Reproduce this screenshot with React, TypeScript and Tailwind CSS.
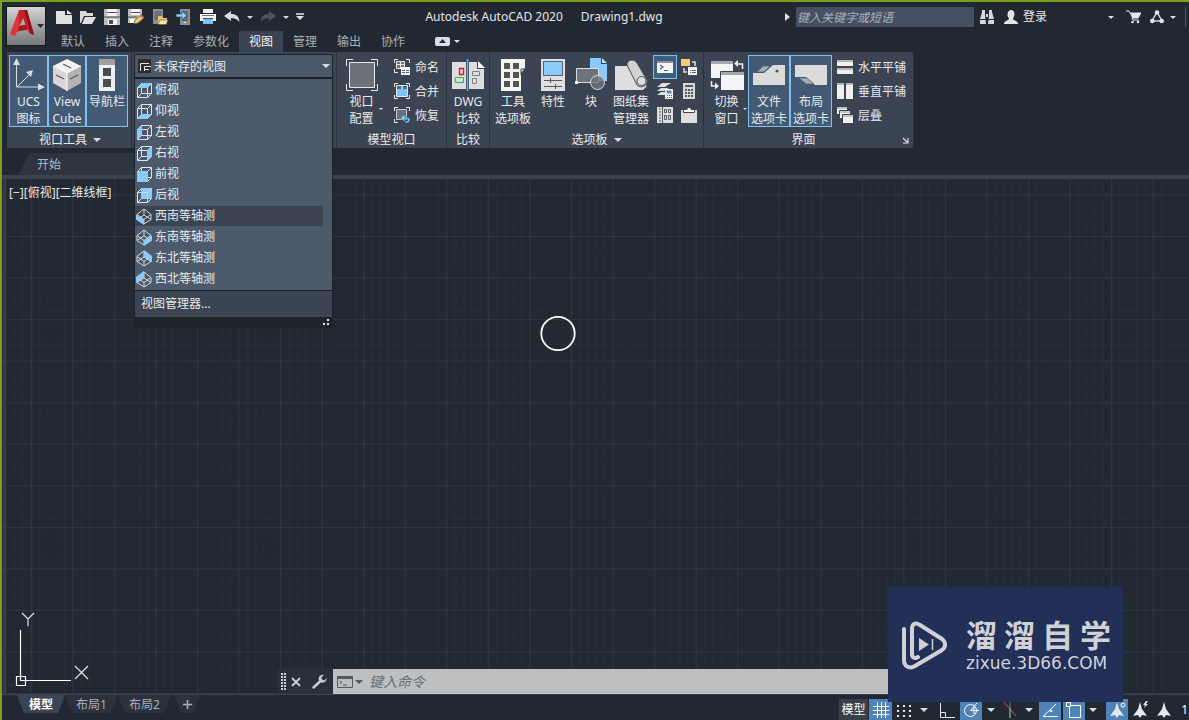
import React, { useState } from "react";

type Kids = { children?: React.ReactNode };

function Svg({ w = 16, h = 16, children }: Kids & { w?: number; h?: number }) {
  return (
    <svg width={w} height={h} viewBox={`0 0 ${w} ${h}`} fill="none" aria-hidden="true" className="shrink-0">
      {children}
    </svg>
  );
}

function Caret({ w = 8 }: { w?: number }) {
  return (
    <svg width={w} height={w / 2} viewBox="0 0 8 4" aria-hidden="true" className="shrink-0">
      <path d="M0 0h8L4 4z" fill="#d9dde2" />
    </svg>
  );
}

/* ---------- quick access icons ---------- */

const NewIcon = () => (
  <Svg>
    <path d="M0 2h9v4h7v9H0z" fill="#e0e0e0" />
    <path d="M11 1l5 4h-5z" fill="#f4f4f4" />
  </Svg>
);
const OpenIcon = () => (
  <Svg>
    <path d="M0 2h6l1 2h6v3H4L1 14H0z" fill="#d9d9d9" />
    <path d="M5 8h11l-4 7H2z" fill="#e0e0e0" />
  </Svg>
);
const SaveIcon = () => (
  <Svg>
    <path d="M0 0h16v16H0z" fill="#bdbdbd" />
    <path d="M3 0h10v7H3z" fill="#f5f5f5" />
    <path d="M3 3.500h10M0 8h16" stroke="#4a4f56" />
    <path d="M4 10h9v6H4z" fill="#f5f5f5" />
    <path d="M5 11h4v4H5z" fill="#4a4f56" />
  </Svg>
);
const SaveAsIcon = () => (
  <Svg>
    <path d="M0 0h14v5l-6 9H0z" fill="#bdbdbd" />
    <path d="M3 0h9v6H3z" fill="#f5f5f5" />
    <path d="M3 3.500h9M0 8h9" stroke="#4a4f56" />
    <path d="M2 10h6v4H2z" fill="#f5f5f5" />
    <path d="M6 15l1-4 6-5 3 3-6 5z" fill="#efc86f" stroke="#6b5530" strokeWidth=".8" />
    <path d="M12 7l1.500-1.500L16 8l-1.500 1.500z" fill="#e06a5a" />
  </Svg>
);
const MobileOpenIcon = () => (
  <Svg>
    <path d="M1 0h10v15H1z" fill="#8b8f94" />
    <path d="M2.500 2h7v9h-7z" fill="#6a6e74" />
    <path d="M6 7h4l1 2h4v6H6z" fill="#e9c374" />
    <path d="M8 11h8l-2 4.500H6z" fill="#fbe3a6" stroke="#6b5530" strokeWidth=".6" />
  </Svg>
);
const MobileSaveIcon = () => (
  <Svg>
    <path d="M4 0h10v16H4z" fill="#8b8f94" />
    <path d="M6 2h6v10H6z" fill="#626a75" />
    <path d="M8 13.500h2" stroke="#e8e8e8" />
    <path d="M0 5h6V2l5 4.500L6 11V8H0z" fill="#8ccbf7" stroke="#22303f" strokeWidth=".6" />
  </Svg>
);
const PrintIcon = () => (
  <Svg>
    <path d="M3 0h10v4H3z" fill="#f5f5f5" />
    <path d="M0 5h16v7H0z" fill="#f5f5f5" />
    <path d="M2 6.500h12" stroke="#6f757d" />
    <path d="M3 9h10v6H3z" fill="#7fbdf0" />
    <path d="M3 9.500h10" stroke="#4a4f56" />
  </Svg>
);
const UndoIcon = () => (
  <Svg>
    <path d="M0 7l7-5v3c5 0 8 2 8.500 8C13 10 11 9 7 9v3z" fill="#d9dde2" />
  </Svg>
);
const RedoIcon = () => (
  <Svg>
    <path d="M16 7L9 2v3C4 5 1 7 .5 13 3 10 5 9 9 9v3z" fill="#4c535e" />
  </Svg>
);

/* ---------- ribbon icons ---------- */

const UcsIcon = () => (
  <Svg w={32} h={33}>
    <path d="M3.500 3v26H29M4 29l13-13" stroke="#d9dde2" />
    <path d="M3.500 0L7 7H0zM32 29l-7 3.500v-7zM20 12l-2 7-5-5z" fill="#d9dde2" />
  </Svg>
);
const CubeIcon = () => (
  <Svg w={32} h={34}>
    <path d="M16 1l14 7-14 7L2 8z" fill="#f4f3f1" />
    <path d="M2 8l14 7v18L2 25z" fill="#d8d6d4" />
    <path d="M30 8l-14 7v18l14-8z" fill="#b4b2b2" />
    <path d="M2 8l14 7 14-7M16 15v18" stroke="#fff" />
    <path d="M12 6l8 4M5 17l8 4M19 21l8-4" stroke="#55585c" strokeWidth="1.300" />
  </Svg>
);
const NavBarIcon = () => (
  <Svg w={16} h={32}>
    <path d="M0 0h16v32H0z" fill="#f0f0f0" />
    <path d="M0 0h16v6H0z" fill="#a09f9d" />
    <path d="M4 9h8v8H4zM4 20h8v8H4z" fill="#4c4c4c" />
  </Svg>
);
const ViewportIcon = () => (
  <Svg w={32} h={32}>
    <path d="M3.500 3.500h25v25h-25z" fill="#6b7079" stroke="#e8e8e8" />
    <path d="M.5 7V.5H7M25 .5h6.500V7M31.500 25v6.500H25M7 31.500H.5V25" stroke="#e8e8e8" />
  </Svg>
);
const Corners = () => (
  <path d="M.5 4V.5H4M12 .5h3.500V4M15.500 12v3.500H12M4 15.500H.5V12" stroke="#e8e8e8" />
);
const NamedIcon = () => (
  <Svg>
    <path d="M.5 4V.5H4M12 .5h3.500V4M4 13.500H.5V10" stroke="#e8e8e8" />
    <path d="M2.500 2.500h8v7h-8zM6.500 2v7M3 5.500h8" fill="#6b7079" stroke="#e8e8e8" />
    <path d="M7 8h9v8H7z" fill="#f5f5f5" />
    <path d="M8 11.500h3M12 11.500h3M8 13.500h3M12 13.500h3" stroke="#55606e" />
  </Svg>
);
const JoinIcon = () => (
  <Svg>
    <Corners />
    <path d="M2.500 2.500h11v11h-11z" fill="#7fc4f7" stroke="#e8e8e8" />
    <path d="M3 3h4v3H3zM9 3h4v3H9z" fill="#5d6875" />
    <path d="M8 3v3" stroke="#e8e8e8" />
  </Svg>
);
const RestoreIcon = () => (
  <Svg>
    <path d="M.5 4V.5H4M12 .5h3.500V4M4 15.500H.5V12" stroke="#e8e8e8" />
    <path d="M2.500 2.500h10v10h-10z" fill="#6b7079" stroke="#c8ccd0" />
    <path d="M6 11l5-4v3c3 0 5 1 5 3s-2 3-5 3v-2c2 0 3-.5 3-1s-1-1-3-1v3z" fill="#7fc4f7" stroke="#2c4560" strokeWidth=".5" />
  </Svg>
);
const DwgIcon = () => (
  <Svg w={34} h={32}>
    <path d="M1 3h14v27H1z" fill="#dedede" />
    <path d="M18 3h8v7h7v20H18z" fill="#dedede" />
    <path d="M27 2l7 7h-7z" fill="#fff" />
    <path d="M16.500 0v32" stroke="#62b0ee" strokeWidth="1.500" />
    <path d="M8.500 9.500h4v6h-4z" stroke="#cf1f2c" strokeWidth="1.500" />
    <path d="M4.500 18.500h8v5h-8z" fill="#c7efc9" stroke="#3fa552" />
    <path d="M21.500 12.500h7v4h-7zM21.500 19.500h4v5h-4z" stroke="#80858b" />
  </Svg>
);
const PaletteIcon = () => (
  <Svg w={25} h={32}>
    <path d="M0 0h24v9l-4 5v18H0z" fill="#f4f4f4" />
    <path d="M3 4h6v6H3zM12 4h6v6h-6zM3 13h6v6H3zM12 13h6v6h-6zM3 22h6v6H3zM12 22h6v6h-6z" fill="#555450" />
    <path d="M24 10h-4v6" stroke="#3b4453" />
  </Svg>
);
const PropsIcon = () => (
  <Svg w={24} h={32}>
    <path d="M0 0h24v32H0z" fill="#e0e0e0" />
    <path d="M2.500 2.500h19v14h-19z" fill="#8bcafb" stroke="#4f6273" />
    <path d="M3 21.500h18M3 27.500h18M9.500 19v5M14.500 25v5" stroke="#55595f" />
  </Svg>
);
const BlockIcon = () => (
  <Svg w={33} h={33}>
    <path d="M15 0h11v6h6v17H15z" fill="#8bcafb" />
    <path d="M27 0l5 5h-5z" fill="#b7defc" />
    <path d="M1.500 10.500h22v14h-22z" fill="#6d727b" stroke="#d9dde2" />
    <circle cx="22.500" cy="24.500" r="7" fill="#6d727b" fillOpacity=".8" stroke="#d9dde2" />
    <path d="M0 23h3v3H0z" fill="#fff" />
  </Svg>
);
const SheetSetIcon = () => (
  <Svg w={33} h={32}>
    <path d="M0 7h12l12 17 8 3-4 4H0z" fill="#dedede" />
    <path d="M12 6c0-5 7-7 10-2l10 17c1 6-6 9-10 5z" fill="#d2d2d2" stroke="#4b4f55" />
    <circle cx="26.500" cy="22" r="4.500" fill="#dedede" stroke="#4b4f55" />
  </Svg>
);
const CmdIcon = () => (
  <Svg>
    <path d="M0 2h16v12H0z" fill="#f5f5f5" />
    <path d="M0 2h16v2H0z" fill="#8d9298" />
    <path d="M3 6l3 2-3 2M7 11.500h4" stroke="#46607a" strokeWidth="1.200" />
  </Svg>
);
const MarkupIcon = () => (
  <Svg>
    <path d="M0 0h9v7H0z" fill="#f3cc75" />
    <path d="M3 9v4h3M11 3h3v4" stroke="#e0e0e0" strokeWidth="1.500" />
    <path d="M7 8h9v8H7z" fill="#f5f5f5" />
    <path d="M9 11.500h1M11 11.500h4M9 13.500h1M11 13.500h4" stroke="#55606e" />
  </Svg>
);
const LayerCalcIcon = () => (
  <Svg>
    <path d="M5 0h9L8 4H0zM4 5h8L7 8H0zM4 9h4v3H0z" fill="#dedede" />
    <path d="M8 6h8v10H8z" fill="#f5f5f5" />
    <path d="M9.500 7.500h5v3h-5z" fill="#4e8cc4" />
    <path d="M10 12.500h5M10 14.500h5" stroke="#44607c" strokeDasharray="1 1" />
  </Svg>
);
const CalcIcon = () => (
  <Svg>
    <path d="M2 0h12v16H2z" fill="#d9d9d9" />
    <path d="M4 2h8v2H4z" fill="#555a61" />
    <path d="M4 7h8M4 10h8M4 13h8" stroke="#555a61" strokeWidth="2" strokeDasharray="2 1" />
  </Svg>
);
const DesignIcon = () => (
  <Svg>
    <path d="M0 0h16v16H0z" fill="#dedede" />
    <path d="M5.500 0v16" stroke="#555a61" />
    <path d="M2 2h2M2 5h2M2 8h2M2 11h2M2 14h2" stroke="#555a61" />
    <path d="M7.500 2.500h2v3h-2zM11.500 2.500h2v3h-2zM7.500 8.500h2v4h-2zM11.500 8.500h2v4h-2z" stroke="#555a61" />
  </Svg>
);
const ClipIcon = () => (
  <Svg>
    <path d="M0 3h16v13H0z" fill="#dedede" />
    <path d="M3 5V3h3l1-2h2l1 2h3v2z" fill="#fff" />
    <path d="M2.500 3v2.500h11V3" stroke="#3b4453" />
  </Svg>
);
const SwitchIcon = () => (
  <Svg w={34} h={30}>
    <path d="M1 1h22v17H1z" fill="#f5f5f5" />
    <path d="M1 1h22v3H1z" fill="#a4a7ab" />
    <path d="M10.500 11.500H35V31H10.500z" fill="#f5f5f5" stroke="#3b4453" />
    <path d="M11 12h23v3H11z" fill="#a4a7ab" />
    <path d="M26 4h6.500v5" stroke="#f0f0f0" strokeWidth="1.500" />
    <path d="M28 0v7l-4-3.500z" fill="#f0f0f0" />
    <path d="M1.500 21v5H6" stroke="#f0f0f0" strokeWidth="1.500" />
    <path d="M5 22.500v7L9 26z" fill="#f0f0f0" />
  </Svg>
);
const FileTabIcon = () => (
  <Svg w={32} h={22}>
    <path d="M0 9h11l9-8h12v20H0z" fill="#dbdbdb" />
    <path d="M4 8l6-6h7l-6 6z" fill="#a6a9ad" stroke="#4a5a6a" strokeWidth=".6" />
    <circle cx="24" cy="7" r="1.500" fill="#4a5055" />
  </Svg>
);
const LayoutTabIcon = () => (
  <Svg w={32} h={22}>
    <path d="M0 1h32v20H20l-9-8H0z" fill="#dbdbdb" />
    <path d="M4 14h8l7 6h-8z" fill="#a6a9ad" stroke="#4a5a6a" strokeWidth=".6" />
  </Svg>
);
const HTileIcon = () => (
  <Svg>
    <path d="M0 1h16v6H0zM0 9h16v6H0z" fill="#f0f0f0" />
    <path d="M0 1h16v2H0zM0 9h16v2H0z" fill="#b3b5b8" />
  </Svg>
);
const VTileIcon = () => (
  <Svg>
    <path d="M0 0h7v16H0zM9 0h7v16H9z" fill="#f0f0f0" />
    <path d="M0 0h7v2H0zM9 0h7v2H9z" fill="#b3b5b8" />
  </Svg>
);
const CascadeIcon = () => (
  <Svg>
    <path d="M0 0h10v7H0z" fill="#f0f0f0" />
    <path d="M2.500 3.500h11v8h-11z" fill="#f0f0f0" stroke="#3b4453" />
    <path d="M5.500 7.500H17V17H5.500z" fill="#f0f0f0" stroke="#3b4453" />
    <path d="M0 0h10v2H0zM3 4h10v2H3zM6 8h10v2H6z" fill="#c4c6c9" />
  </Svg>
);

/* ---------- saved view icons ---------- */

const orthoFaces: Record<string, string> = {
  top: "M1 6l5-5h10l-5 5z",
  bottom: "M1 16l5-5h10l-5 5z",
  left: "M1 6l5-5v10l-5 5z",
  right: "M11 6l5-5v10l-5 5z",
  front: "M1 5h11v11H1z",
  back: "M5 1h11v11H5z",
};
const isoFaces: Record<string, string> = {
  sw: "M0 6.500l8 5V17l-8-5.500z",
  se: "M16 6.500l-8 5V17l8-5.500z",
  ne: "M8 0l8 6v6L8 7z",
  nw: "M8 0L0 6v6l8-5z",
};

function ViewIcon({ kind }: { kind: string }) {
  const ortho = kind in orthoFaces;
  return (
    <Svg w={17} h={17}>
      {ortho ? (
        <>
          <path
            d="M5.500 1.500h10v10h-10zM1.500 5.500h10v10h-10zM1.500 5.500l4-4M11.500 5.500l4-4M11.500 15.500l4-4M1.500 15.500l4-4"
            stroke="#dfe3e8"
          />
          <path d={orthoFaces[kind]} fill="#8bcafb" />
          {kind === "back" && <path d="M1.500 5.500h10v10M11.500 5.500l4-4" stroke="#b9dcf7" />}
        </>
      ) : (
        <>
          <path d="M8 1l7 5.500v5L8 16l-7-4.500v-5zM1 6.500l7 5 7-5M8 11.500V16M8 1v6M1 11.500L8 7l7 4.500" stroke="#dfe3e8" strokeWidth=".9" />
          <path d={isoFaces[kind]} fill="#8bcafb" />
        </>
      )}
    </Svg>
  );
}

const views = [
  { kind: "top", label: "俯视" },
  { kind: "bottom", label: "仰视" },
  { kind: "left", label: "左视" },
  { kind: "right", label: "右视" },
  { kind: "front", label: "前视" },
  { kind: "back", label: "后视" },
  { kind: "sw", label: "西南等轴测" },
  { kind: "se", label: "东南等轴测" },
  { kind: "ne", label: "东北等轴测" },
  { kind: "nw", label: "西北等轴测" },
];

/* ---------- ribbon parts ---------- */

function Panel({
  title,
  className = "",
  caret,
  launcher,
  children,
}: Kids & { title: string; className?: string; caret?: boolean; launcher?: boolean }) {
  return (
    <section className={`relative flex shrink-0 flex-col border-r border-[#2a313c] bg-[#3b4453] ${className}`}>
      <div className="flex h-20 items-start pt-[3px]">{children}</div>
      <h2 className={`flex h-4 items-center justify-center gap-1.5 leading-4 ${launcher ? "pr-2.5" : ""}`}>
        {title}
        {caret && <Caret />}
      </h2>
      {launcher && (
        <button aria-label="界面设置" className="absolute right-1 bottom-1">
          <Svg w={7} h={7}>
            <path d="M1 1l4 4M6 1v5H1" stroke="#d9dde2" strokeWidth="1.200" />
          </Svg>
        </button>
      )}
    </section>
  );
}

function BigButton({
  icon,
  lines,
  on,
  caret,
  className = "",
}: {
  icon: React.ReactNode;
  lines: string[];
  on?: boolean;
  caret?: boolean;
  className?: string;
}) {
  return (
    <button
      className={`relative flex h-[72px] shrink-0 flex-col items-center border leading-[17px] whitespace-nowrap ${
        on ? "border-[#7fc0f0] bg-[#425a74]" : "border-transparent"
      } ${className}`}
    >
      <span className="flex h-[37px] shrink-0 items-center">{icon}</span>
      {lines.map((l) => (
        <span key={l}>{l}</span>
      ))}
      {caret && (
        <span className="absolute right-0 bottom-4">
          <Caret w={4} />
        </span>
      )}
    </button>
  );
}

function SmallButton({ icon, label }: { icon: React.ReactNode; label: string }) {
  return (
    <button className="flex h-6 items-center gap-[5px] whitespace-nowrap">
      {icon}
      <span className="pt-0.5">{label}</span>
    </button>
  );
}

function ToolCell({ icon, label, on }: { icon: React.ReactNode; label: string; on?: boolean }) {
  return (
    <button
      aria-label={label}
      className={`flex size-6 items-center justify-center border ${
        on ? "border-[#7fc0f0] bg-[#3f5f7f]" : "border-transparent"
      }`}
    >
      {icon}
    </button>
  );
}

function ViewsPanel() {
  const [current, setCurrent] = useState("未保存的视图");
  const [hover, setHover] = useState("sw");
  return (
    <section className="relative w-[205px] shrink-0 border-r border-[#2a313c] bg-[#3b4453] pt-[2px] pr-[3px] pl-0.5">
      <div className="relative flex h-6 items-center border border-[#1c2129] bg-[#4b586a]">
        <span className="pointer-events-none absolute left-[3px] flex bg-[#2c2c2c]">
          <Svg w={13} h={14}>
            <path d="M2.500 12V4.500H11M6.500 12V7.500H13M6.500 10.500H11" stroke="#e4e4dc" />
          </Svg>
        </span>
        <select
          aria-label="视图"
          value={current}
          onChange={(e) => setCurrent(e.target.value)}
          className="h-full w-full appearance-none bg-transparent pt-0.5 pl-[19px] outline-none"
        >
          <option>{current}</option>
        </select>
        <span className="pointer-events-none absolute right-0.5 flex">
          <Caret />
        </span>
      </div>
      <div className="absolute top-[26px] right-[3px] left-0.5 z-20 border border-[#1c2129] bg-[#4d5a6b]">
        <ul className="pt-px">
          {views.map((v) => (
            <li key={v.kind} className="h-[21px] pr-[9px]">
              <button
                onMouseEnter={() => setHover(v.kind)}
                onClick={() => setCurrent(v.label)}
                className={`flex h-5 w-full items-center gap-0.5 pl-px ${hover === v.kind ? "bg-[#3c4451]" : ""}`}
              >
                <ViewIcon kind={v.kind} />
                {v.label}
              </button>
            </li>
          ))}
        </ul>
        <button className="flex h-[27px] w-full items-center border-t border-[#1c2129] bg-[#3b4453] pl-1.5">
          视图管理器...
        </button>
        <div className="flex h-2.5 items-center justify-end bg-[#1e242c] pr-0.5">
          <Svg w={7} h={7}>
            <path d="M4 0h2v2H4zM4 4h2v2H4zM0 4h2v2H0z" fill="#e0e3e7" />
          </Svg>
        </div>
      </div>
    </section>
  );
}

function Ribbon() {
  return (
    <div className="flex h-24 pl-[5px]">
      <Panel title="视口工具" caret className="w-[125px] pl-0.5">
        <BigButton on icon={<UcsIcon />} lines={["UCS", "图标"]} className="w-[39px]" />
        <BigButton on icon={<CubeIcon />} lines={["View", "Cube"]} className="w-[38px]" />
        <BigButton on icon={<NavBarIcon />} lines={["导航栏"]} className="w-[42px]" />
      </Panel>
      <ViewsPanel />
      <Panel title="模型视口" className="w-[110px]">
        <BigButton caret icon={<ViewportIcon />} lines={["视口", "配置"]} className="mr-2.5 ml-0.5 w-[45px]" />
        <div className="flex flex-col">
          <SmallButton icon={<NamedIcon />} label="命名" />
          <SmallButton icon={<JoinIcon />} label="合并" />
          <SmallButton icon={<RestoreIcon />} label="恢复" />
        </div>
      </Panel>
      <Panel title="比较" className="w-[43px]">
        <BigButton icon={<DwgIcon />} lines={["DWG", "比较"]} className="w-full" />
      </Panel>
      <Panel title="选项板" caret className="w-[214px]">
        <BigButton icon={<PaletteIcon />} lines={["工具", "选项板"]} className="ml-[3px] w-10" />
        <BigButton icon={<PropsIcon />} lines={["特性"]} className="w-10" />
        <BigButton icon={<BlockIcon />} lines={["块"]} className="w-9" />
        <BigButton icon={<SheetSetIcon />} lines={["图纸集", "管理器"]} className="w-11" />
        <div className="grid grid-cols-2">
          <ToolCell on icon={<CmdIcon />} label="命令行" />
          <ToolCell icon={<MarkupIcon />} label="标记集管理器" />
          <ToolCell icon={<LayerCalcIcon />} label="图层特性" />
          <ToolCell icon={<CalcIcon />} label="快速计算器" />
          <ToolCell icon={<DesignIcon />} label="设计中心" />
          <ToolCell icon={<ClipIcon />} label="剪贴板" />
        </div>
      </Panel>
      <Panel title="界面" launcher className="w-[210px]">
        <BigButton caret icon={<SwitchIcon />} lines={["切换", "窗口"]} className="ml-px w-[43px]" />
        <BigButton on icon={<FileTabIcon />} lines={["文件", "选项卡"]} className="w-[42px]" />
        <BigButton on icon={<LayoutTabIcon />} lines={["布局", "选项卡"]} className="w-[42px]" />
        <div className="ml-[5px] flex flex-col">
          <SmallButton icon={<HTileIcon />} label="水平平铺" />
          <SmallButton icon={<VTileIcon />} label="垂直平铺" />
          <SmallButton icon={<CascadeIcon />} label="层叠" />
        </div>
      </Panel>
    </div>
  );
}

/* ---------- title bar ---------- */

function QuickButton({ label, className = "w-6", children }: Kids & { label: string; className?: string }) {
  return (
    <button aria-label={label} className={`flex h-6 shrink-0 items-center justify-center ${className}`}>
      {children}
    </button>
  );
}

function TitleBar() {
  return (
    <div className="flex h-[29px] items-center pt-px pl-1.5">
      <QuickButton label="新建"><NewIcon /></QuickButton>
      <QuickButton label="打开"><OpenIcon /></QuickButton>
      <QuickButton label="保存"><SaveIcon /></QuickButton>
      <QuickButton label="另存为"><SaveAsIcon /></QuickButton>
      <QuickButton label="从移动设备打开"><MobileOpenIcon /></QuickButton>
      <QuickButton label="保存到移动设备"><MobileSaveIcon /></QuickButton>
      <QuickButton label="打印"><PrintIcon /></QuickButton>
      <QuickButton label="放弃"><UndoIcon /></QuickButton>
      <QuickButton label="放弃列表" className="w-3"><Caret w={6} /></QuickButton>
      <QuickButton label="重做"><RedoIcon /></QuickButton>
      <QuickButton label="重做列表" className="w-3"><Caret w={6} /></QuickButton>
      <QuickButton label="自定义快速访问工具栏" className="w-4">
        <Svg w={8} h={8}>
          <path d="M0 1h8" stroke="#e0e3e7" strokeWidth="1.500" />
          <path d="M0 3h8L4 7z" fill="#e0e3e7" />
        </Svg>
      </QuickButton>
      <h1 className="flex flex-1 justify-center gap-[18px] text-xs whitespace-nowrap text-[#e4e6e9]">
        <span>Autodesk AutoCAD 2020</span>
        <span>Drawing1.dwg</span>
      </h1>
      <QuickButton label="展开搜索" className="w-4">
        <Svg w={5} h={8}>
          <path d="M0 0v8l5-4z" fill="#e0e3e7" />
        </Svg>
      </QuickButton>
      <input
        aria-label="搜索"
        placeholder="键入关键字或短语"
        className="h-5 w-[178px] bg-[#465062] px-px text-xs italic outline-none placeholder:text-[#aab2bf]"
      />
      <QuickButton label="搜索" className="w-[26px]">
        <Svg w={14} h={14}>
          <path d="M2 2h3v3l1 9H0V9zM12 2H9v3l-1 9h6V9z" fill="#d5d8dc" />
          <path d="M2 0h3v2H2zM9 0h3v2H9zM6 4h2v3H6z" fill="#d5d8dc" />
          <path d="M0 9.500h6M8 9.500h6" stroke="#222831" />
        </Svg>
      </QuickButton>
      <button className="flex items-center gap-[5px] pl-1 whitespace-nowrap">
        <Svg w={14} h={15}>
          <path d="M7 0c2.500 0 3.500 2 3.500 4S9 8 9 9c0 1 5 2 5 5H0c0-3 5-4 5-5 0-1-1.500-2-1.500-4S4.500 0 7 0z" fill="#e4e6e9" />
        </Svg>
        登录
      </button>
      <QuickButton label="登录菜单" className="ml-14 w-4"><Caret w={6} /></QuickButton>
      <QuickButton label="应用商店" className="w-7">
        <Svg w={15} h={14}>
          <path d="M0 1h3l1 2h11l-3 5H6l1 2h6" stroke="#e0e5f0" />
          <path d="M4 3h11l-3 5H6z" fill="#e0e5f0" />
          <circle cx="6.500" cy="12" r="1.300" fill="#e0e5f0" />
          <circle cx="12" cy="12" r="1.300" fill="#e0e5f0" />
        </Svg>
      </QuickButton>
      <QuickButton label="保持连接" className="w-5">
        <Svg w={14} h={14}>
          <path d="M7 2l5 9H2z" stroke="#cdd6ea" strokeWidth="1.500" />
          <circle cx="7" cy="2.500" r="2.300" fill="#dfe5f3" />
          <circle cx="2.300" cy="11" r="2.300" fill="#dfe5f3" />
          <circle cx="11.700" cy="11" r="2.300" fill="#dfe5f3" />
        </Svg>
      </QuickButton>
      <QuickButton label="连接菜单" className="w-3"><Caret w={6} /></QuickButton>
      <span className="mr-[3px] ml-1.5 h-5 w-px bg-[#4d5561]" />
    </div>
  );
}

const tabs = ["默认", "插入", "注释", "参数化", "视图", "管理", "输出", "协作"];

function RibbonTabs() {
  return (
    <nav className="flex h-[21px] pl-[5px] text-[#a9b0ba]">
      {tabs.map((t) => (
        <button
          key={t}
          className={`px-2.5 whitespace-nowrap ${t === "视图" ? "bg-[#3b4453] text-[#f0f2f4]" : ""}`}
        >
          {t}
        </button>
      ))}
      <button aria-label="最小化功能区" className="ml-5 flex items-center gap-1">
        <Svg w={15} h={9}>
          <rect x="0" y="0" width="15" height="9" rx="2" fill="#d9dde8" />
          <path d="M4 6l3.500-4L11 6z" fill="#222831" />
        </Svg>
        <Caret w={6} />
      </button>
    </nav>
  );
}

/* ---------- drawing area ---------- */

function Canvas() {
  return (
    <main className="relative flex-1 overflow-hidden border-b border-[#3d4550] bg-[#212831]">
      <svg className="absolute inset-0 h-full w-full" aria-hidden="true">
        <defs>
          <pattern id="minor" width="8.310" height="8.310" x="28.800" y="15.500" patternUnits="userSpaceOnUse">
            <path d="M0 .5h8.310M.5 0v8.310" stroke="#252d37" />
          </pattern>
          <pattern id="major" width="41.550" height="41.550" x="28.800" y="15.500" patternUnits="userSpaceOnUse">
            <path d="M0 .5h41.550M.5 0v41.550" stroke="#2d3641" />
          </pattern>
        </defs>
        <rect width="100%" height="100%" fill="url(#minor)" />
        <rect width="100%" height="100%" fill="url(#major)" />
        <path d="M2.500 0v2000" stroke="#343d48" strokeWidth="3" />
        <circle cx="556" cy="154.500" r="16.700" stroke="#fff" strokeWidth="1.800" fill="none" />
      </svg>
      <p className="relative pt-[5px] pl-[7px] leading-[18px] text-[#e8eaec]">[−][俯视][二维线框]</p>
      <svg width="80" height="76" className="absolute bottom-2 left-3" fill="none" aria-hidden="true">
        <path d="M6.500 20v50.500H57M2.500 66.500h9v9h-9z" stroke="#fff" strokeWidth="1.200" />
        <path d="M8 3l6 6 6-6M14 9v7M61 56l13 13M74 56L61 69" stroke="#e0e3e7" strokeWidth="1.200" />
      </svg>
      <div className="absolute right-[65px] bottom-0 left-[275px] flex h-[25px] items-stretch">
        <div className="flex w-14 items-center gap-[5px] bg-[#2a303b] pl-1">
          <Svg w={5} h={18}>
            <path d="M1 0v18M4 0v18" stroke="#d0d3d7" strokeWidth="2" strokeDasharray="2 1" />
          </Svg>
          <button aria-label="关闭">
            <Svg w={10} h={10}>
              <path d="M1 1l8 8M9 1L1 9" stroke="#c9ccd0" strokeWidth="1.800" />
            </Svg>
          </button>
          <button aria-label="自定义" className="ml-1.5">
            <Svg w={15} h={15}>
              <path d="M1.500 13.500L9 6.500" stroke="#c9ccd0" strokeWidth="2.500" strokeLinecap="round" />
              <path d="M12 1a4 4 0 10 2.500 3l-2 2.500-2.500-1-.5-2.500z" fill="#c9ccd0" />
            </Svg>
          </button>
        </div>
        <label className="flex flex-1 items-center gap-0.5 bg-[#bdbfc1] pl-1">
          <Svg w={16} h={12}>
            <path d="M.5.5h15v11H.5z" stroke="#55585c" />
            <path d="M0 0h16v3H0z" fill="#55585c" />
            <path d="M2.500 5l2.500 1.500L2.500 8M6 9h4" stroke="#55585c" />
          </Svg>
          <svg width="8" height="4" viewBox="0 0 8 4" aria-hidden="true">
            <path d="M0 0h8L4 4z" fill="#55585c" />
          </svg>
          <input
            aria-label="命令行"
            placeholder="键入命令"
            className="ml-1 min-w-0 flex-1 bg-transparent text-sm italic outline-none placeholder:text-[#6b6e72]"
          />
        </label>
        <span className="my-[7px] w-px bg-transparent shadow-none" />
      </div>
    </main>
  );
}

/* ---------- status bar ---------- */

const tabShape = "[clip-path:polygon(0_0,100%_0,calc(100%-7px)_100%,7px_100%)]";

function StatusButton({ label, on, className = "w-[22px]", children }: Kids & { label: string; on?: boolean; className?: string }) {
  return (
    <button
      aria-label={label}
      className={`flex h-full shrink-0 items-center justify-center ${on ? "bg-[#5083b8]" : ""} ${className}`}
    >
      {children}
    </button>
  );
}

const Person = () => <path d="M8 1l2 7 5 7-5-1-2 3-2-3-5 1 5-7z" fill="#e4e7eb" />;

function StatusBar() {
  return (
    <footer className="flex h-[25px] justify-between overflow-hidden">
      <div className="flex h-[18px] pl-[15px] text-[#a9b0ba]">
        <button className={`bg-[#3b4453] px-3 pt-px font-bold whitespace-nowrap text-white ${tabShape}`}>模型</button>
        <button className={`bg-[#2b323e] px-[11px] pt-px whitespace-nowrap ${tabShape}`}>布局1</button>
        <button className={`bg-[#2b323e] px-[11px] pt-px whitespace-nowrap ${tabShape}`}>布局2</button>
        <button aria-label="新建布局" className={`ml-1 flex items-center bg-[#2b323e] px-2 ${tabShape}`}>
          <Svg w={9} h={9}>
            <path d="M4.500 0v9M0 4.500h9" stroke="#a9b0ba" strokeWidth="1.600" />
          </Svg>
        </button>
      </div>
      <div className="mt-1 flex h-[21px] items-stretch justify-end">
        <button className="w-[29px] bg-[#38404c] whitespace-nowrap text-white">模型</button>
        <StatusButton label="栅格" on className="ml-px w-[23px]">
          <Svg>
            <path d="M4.500 0v16M8.500 0v16M12.500 0v16M0 4.500h16M0 8.500h16M0 12.500h16" stroke="#fff" />
          </Svg>
        </StatusButton>
        <StatusButton label="捕捉" className="w-6">
          <Svg w={14} h={14}>
            <path d="M0 3h14M0 8h14M0 13h14" stroke="#e4e7eb" strokeWidth="2" strokeDasharray="2 4" />
          </Svg>
        </StatusButton>
        <StatusButton label="捕捉菜单" className="w-4"><Caret w={8} /></StatusButton>
        <StatusButton label="正交" className="ml-0.5 w-[26px]">
          <Svg>
            <path d="M1.500 1v14.500H16M1.500 10.500h5v5" stroke="#e4e7eb" />
          </Svg>
        </StatusButton>
        <StatusButton label="极轴追踪" on>
          <Svg>
            <circle cx="7.500" cy="8.500" r="6" stroke="#fff" />
            <path d="M7.500 8.500H16M7.500 8.500L14 1M11 5v7" stroke="#fff" />
          </Svg>
        </StatusButton>
        <StatusButton label="极轴菜单" className="w-[18px]"><Caret w={8} /></StatusButton>
        <StatusButton label="等轴测草图" className="w-[19px]">
          <Svg>
            <path d="M2 0l12 14" stroke="#c4575c" />
            <path d="M8 6v10" stroke="#8fc796" strokeWidth="1.200" />
            <path d="M8 0v6" stroke="#8fc796" strokeWidth=".6" />
          </Svg>
        </StatusButton>
        <StatusButton label="等轴测菜单" className="w-5"><Caret w={8} /></StatusButton>
        <StatusButton label="对象捕捉追踪" on>
          <Svg>
            <path d="M1 14.500h15M1 14.500L14 2" stroke="#fff" />
            <circle cx="9" cy="9" r="1.300" fill="#fff" />
          </Svg>
        </StatusButton>
        <StatusButton label="对象捕捉" on className="ml-0.5 w-[22px]">
          <Svg>
            <path d="M3.500 3.500h11v12h-11z" stroke="#fff" />
            <path d="M.5.5h4v4h-4z" fill="#5083b8" stroke="#fff" />
          </Svg>
        </StatusButton>
        <StatusButton label="对象捕捉菜单" className="mr-[5px] w-4"><Caret w={8} /></StatusButton>
        <StatusButton label="注释可见性" on>
          <Svg w={17} h={17}>
            <Person />
            <circle cx="14" cy="4" r="2" stroke="#fff" />
          </Svg>
        </StatusButton>
        <StatusButton label="自动缩放" className="w-6">
          <Svg w={17} h={17}>
            <Person />
            <path d="M14 0l-3 4h2l-1 3 4-4h-2l2-3z" fill="#e4e7eb" />
          </Svg>
        </StatusButton>
        <StatusButton label="注释比例" className="w-6">
          <Svg w={17} h={17}>
            <Person />
          </Svg>
        </StatusButton>
        <span className="w-[13px] pr-px text-right leading-[21px] text-white">1</span>
      </div>
    </footer>
  );
}

function Watermark() {
  return (
    <aside className="absolute right-[66px] bottom-[18px] z-30 flex h-[115px] w-[235px] items-center bg-[#222f57] pl-3 text-[#d0d1d5]">
      <Svg w={50} h={50}>
        <path
          d="M4 9v31c0 7 6 9 11 6l27-16c4-3 4-8 0-11L20 5c-5-3-8-1-8 4v25c0 4 3 5 6 3"
          stroke="#d0d1d5"
          strokeWidth="4"
          strokeLinecap="round"
        />
        <path d="M19 18l10 6.500L19 31z" fill="#d0d1d5" />
        <path d="M32.500 19v11" stroke="#d0d1d5" strokeWidth="1.500" />
      </Svg>
      <div className="ml-4">
        <p className="flex gap-[7px] text-[31px] leading-9 font-bold whitespace-nowrap">
          <span>溜</span>
          <span>溜</span>
          <span>自</span>
          <span>学</span>
        </p>
        <p className="font-['DejaVu_Sans',sans-serif] text-[17px] leading-5 whitespace-nowrap">zixue.3D66.COM</p>
      </div>
    </aside>
  );
}

export default function App() {
  return (
    <div className="relative flex min-h-screen flex-col overflow-hidden border-t-2 border-l-2 border-[#78a11c] bg-[#222831] font-['Noto_Sans','Noto_Sans_CJK_SC',sans-serif] text-xs text-[#e8eaed]">
      <header className="flex">
        <button
          aria-label="应用程序菜单"
          className="mt-1 ml-1 flex size-10 shrink-0 items-center border border-[#15181c] bg-linear-to-b from-[#d4d4d4] to-[#77797c]"
        >
          <Svg w={38} h={38}>
            <path d="M7 20l15-3 2 5-17 3z" fill="#a3151f" />
            <path d="M12 3h7l-4 11-5 11-2 4-5-2z" fill="#e0343d" />
            <path d="M12 3h8l7 25-5-2-3-7-3-8-4 6z" fill="#c4202a" />
            <path d="M17 3h3l7 25-3-1z" fill="#8f121b" />
            <path d="M30 17h7l-3.500 4z" fill="#26292e" />
          </Svg>
        </button>
        <div className="min-w-0 flex-1">
          <TitleBar />
          <RibbonTabs />
        </div>
      </header>
      <Ribbon />
      <div className="flex h-[31px] items-end border-b-4 border-[#3b4350] pl-4">
        <button className="h-[22px] w-36 bg-[#2d3541] pt-0.5 pl-[19px] text-left text-[#b3b9c2] [clip-path:polygon(12px_0,100%_0,calc(100%-12px)_100%,0_100%)]">
          开始
        </button>
      </div>
      <Canvas />
      <StatusBar />
      <Watermark />
    </div>
  );
}
